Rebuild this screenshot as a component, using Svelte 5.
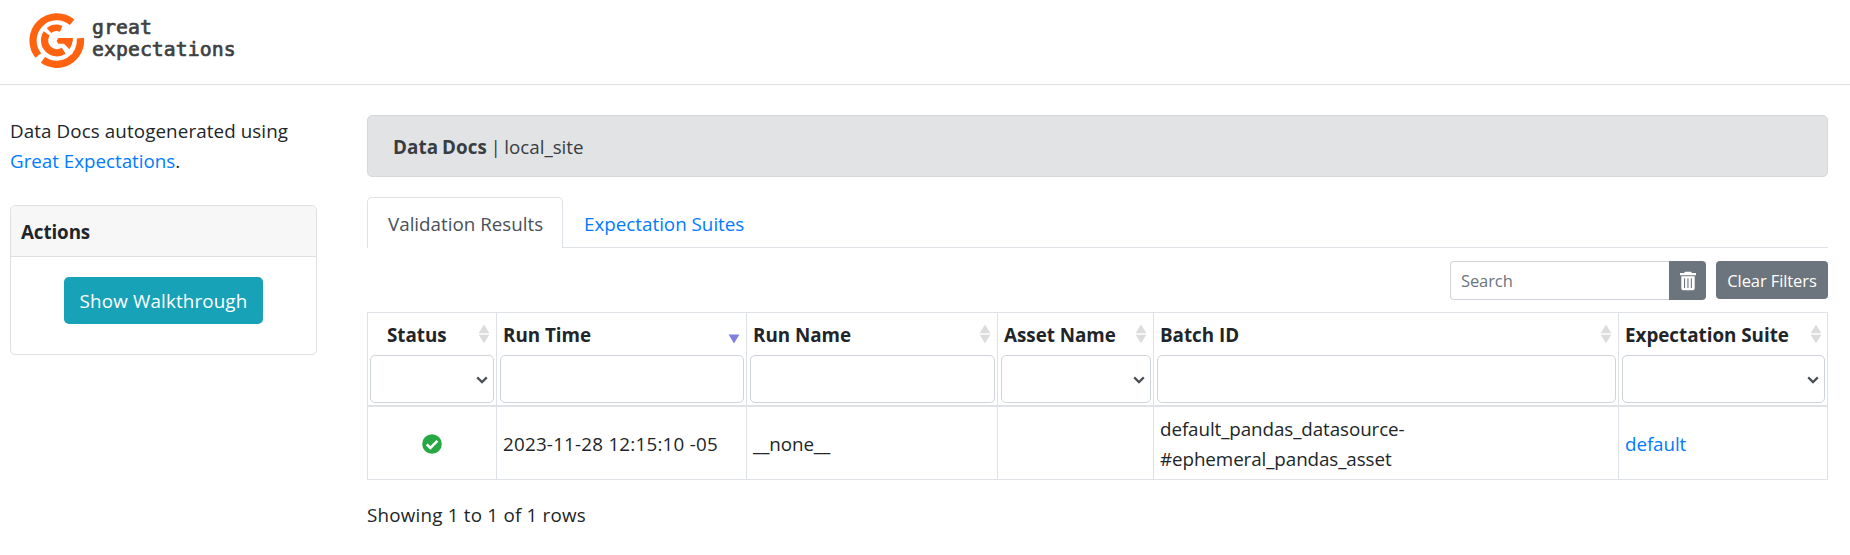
<script>
  const columns = [
    { title: 'Status', kind: 'select', sort: 'both', center: true },
    { title: 'Run Time', kind: 'input', sort: 'desc' },
    { title: 'Run Name', kind: 'input', sort: 'both' },
    { title: 'Asset Name', kind: 'select', sort: 'both' },
    { title: 'Batch ID', kind: 'input', sort: 'both' },
    { title: 'Expectation Suite', kind: 'select', sort: 'both' }
  ];
</script>

<header>
  <svg class="mark" width="56" height="56" viewBox="0 0 56 56">
    <g fill="none" stroke="#ff6310">
      <path d="M43.1 9.3A23.8 23.8 0 0 0 9.3 42.5" stroke-width="7.2" />
      <path d="M13.9 46.9A23.8 23.8 0 0 0 51.4 25.1" stroke-width="7.2" />
      <path d="M19 18.3A12.6 12.6 0 0 1 32.2 15.9" stroke-width="6.4" />
      <path d="M17.7 20.4A12.4 12.4 0 0 0 34.7 37.8" stroke-width="7.2" />
    </g>
    <path fill="#ff6310" d="M29.3 25.1H44Q43.8 31.4 40.2 36.4L34.9 30.8H29.3L27.6 28z" />
    <path d="M16.2 15.3l6.5 7.2M34.6 32.4l8.4 8.4" stroke="#fff" stroke-width="2.6" />
  </svg>
  <div class="brand">great<br />expectations</div>
</header>

<div class="page">
  <aside>
    <p class="intro"><span>Data Docs autogenerated using</span><br /><a href="#ge">Great Expectations</a>.</p>
    <section class="card">
      <h2>Actions</h2>
      <div class="card-body"><button class="walk">Show Walkthrough</button></div>
    </section>
  </aside>

  <main>
    <div class="crumb"><strong>Data Docs</strong> | <span>local_site</span></div>
    <nav>
      <a class="tab active" href="#validation">Validation Results</a>
      <a class="tab" href="#suites">Expectation Suites</a>
    </nav>
    <div class="toolbar">
      <div class="group">
        <input class="search" placeholder="Search" />
        <button class="trash" aria-label="Clear search">
          <svg width="18" height="20" viewBox="0 0 18 20">
            <path fill="#fff" fill-rule="evenodd" d="M6 .8h6l.9 1.2H17v2.2H1V2h4.1zM2.3 5.3h13.4v12.2a1.7 1.7 0 0 1-1.7 1.7H4a1.7 1.7 0 0 1-1.7-1.7zM5 7.3v9.6h1.1V7.3zm3.4 0v9.6h1.1V7.3zm3.4 0v9.6h1.1V7.3z" />
          </svg>
        </button>
      </div>
      <button class="clear">Clear Filters</button>
    </div>

    <div class="table">
      {#each columns as col}
        <div class="head">
          <div class="title" class:center={col.center}>
            <span>{col.title}</span>
            <svg class="sort" width="12" height="20" viewBox="0 0 12 20">
              {#if col.sort === 'both'}
                <path fill="#dcdcdc" d="M6 .6l5.4 8.6H.6zM.6 10.8h10.8L6 19.2z" />
              {:else}
                <path fill="#8080e0" d="M.6 10.4h10.8L6 19.4z" />
              {/if}
            </svg>
          </div>
          <div class="filter">
            {#if col.kind === 'select'}
              <svg width="12" height="8" viewBox="0 0 12 8"><path d="M1.2 1.4L6 6.1l4.8-4.7" fill="none" stroke="#495057" stroke-width="2.2" /></svg>
            {/if}
          </div>
        </div>
      {/each}
      <div class="cell middle">
        <svg width="20" height="20" viewBox="0 0 20 20"><circle cx="10" cy="10" r="9.8" fill="#28a745" /><path d="M4.7 10.4l3.7 3.6 7-7.1" fill="none" stroke="#fff" stroke-width="2.6" /></svg>
      </div>
      <div class="cell time">2023-11-28 12:15:10 -05</div>
      <div class="cell">__none__</div>
      <div class="cell"></div>
      <div class="cell">default_pandas_datasource-<br />#ephemeral_pandas_asset</div>
      <div class="cell"><a href="#default">default</a></div>
    </div>
    <div class="info">Showing 1 to 1 of 1 rows</div>
  </main>
</div>

<style>
  :global(body) {
    background: #fff;
    color: #212529;
    font: 18.8px/30px 'Open Sans', 'Noto Sans', sans-serif;
    letter-spacing: -0.1px;
  }
  :global(#app) { overflow: hidden; }
  * { box-sizing: border-box; }
  a { color: #007bff; text-decoration: none; }
  button, input { font: inherit; letter-spacing: inherit; border: 0; padding: 0; }
  header {
    height: 85px;
    border-bottom: 1px solid #dee2e6;
    padding: 13px 0 0 29px;
    display: flex;
  }
  .brand {
    padding: 4px 0 0 7px;
    font: 19.8px/22px 'DejaVu Sans Mono', monospace;
    letter-spacing: 0.06px;
    color: #404041;
    -webkit-text-stroke: 0.7px #404041;
  }
  .page { display: flex; }
  aside { width: 317px; padding: 31px 0 0 10px; }
  .intro { margin: 0 0 29px; letter-spacing: -0.02px; }
  .intro span { letter-spacing: 0.1px; }
  .card { height: 150px; border: 1px solid #dfdfdf; border-radius: 5px; overflow: hidden; }
  h2 {
    margin: 0; height: 51px; padding: 11px 0 0 10px;
    font-size: inherit; font-weight: 700;
    background: #f7f7f7; border-bottom: 1px solid #dfdfdf;
  }
  .card-body { padding-top: 20px; text-align: center; }
  .walk { width: 199px; height: 47px; border-radius: 5px; background: #17a2b8; color: #fff; letter-spacing: 0.15px; }
  main { width: 1461px; margin-left: 50px; padding-top: 30px; }
  .crumb {
    height: 62px; padding: 16px 25px 14px; white-space: nowrap; word-spacing: -1.2px;
    background: #e2e3e5; border: 1px solid #d6d8db; border-radius: 5px; color: #383d41;
  }
  .crumb strong { letter-spacing: 0.1px; }
  .crumb span { letter-spacing: 0; }
  nav { display: flex; margin-top: 20px; height: 51px; border-bottom: 1px solid #dee2e6; }
  .tab { height: 51px; padding: 11px 20px 9px; border: 1px solid transparent; border-bottom: 0; white-space: nowrap; letter-spacing: 0; }
  .tab.active {
    width: 196px; color: #495057; background: #fff;
    border-color: #dee2e6; border-radius: 5px 5px 0 0;
  }
  .toolbar { display: flex; justify-content: flex-end; gap: 10px; height: 51px; padding-top: 13px; font-size: 16.5px; }
  .group { display: flex; height: 39px; }
  .search { width: 219px; padding: 1px 10px 0; border: 1px solid #ced4da; border-right: 0; border-radius: 4px 0 0 4px; }
  .search::placeholder { color: #6c757d; }
  .trash { width: 37px; background: #6c757d; border-radius: 0 4px 4px 0; display: grid; place-items: center; }
  .clear { width: 112px; height: 38px; background: #6c757d; color: #fff; border-radius: 4px; padding-top: 1px; }
  .table {
    display: grid; margin-top: 13px; height: 168px;
    grid-template-columns: 129px 250px 251px 156px 465px 210px;
    grid-template-rows: 94px 73px;
    border-top: 1px solid #dee2e6; border-right: 1px solid #dee2e6;
  }
  .head { border-left: 1px solid #dee2e6; border-bottom: 2px solid #dee2e6; min-width: 0; }
  .title { height: 42px; display: flex; justify-content: space-between; padding: 7px 6px 0; font-weight: 700; white-space: nowrap; letter-spacing: 0; }
  .title.center { padding-left: 19px; }
  .sort { margin-top: 4px; flex: none; }
  .filter {
    height: 48px; margin: 0 2px 0 3px; border: 1px solid #ced4da; border-radius: 5px;
    display: flex; align-items: center; justify-content: flex-end; padding: 2px 5px 0 0;
  }
  .head:first-child .filter { margin-left: 2px; }
  .head:nth-child(6) .filter { margin-right: 3px; }
  .cell {
    border-left: 1px solid #dee2e6; border-bottom: 1px solid #dee2e6;
    padding: 2px 6px 0; display: flex; align-items: center; white-space: nowrap;
    letter-spacing: -0.08px;
  }
  .time { letter-spacing: 0.23px; }
  .middle { justify-content: center; padding-top: 1px; }
  .info { margin-top: 20px; letter-spacing: 0.22px; }
</style>
